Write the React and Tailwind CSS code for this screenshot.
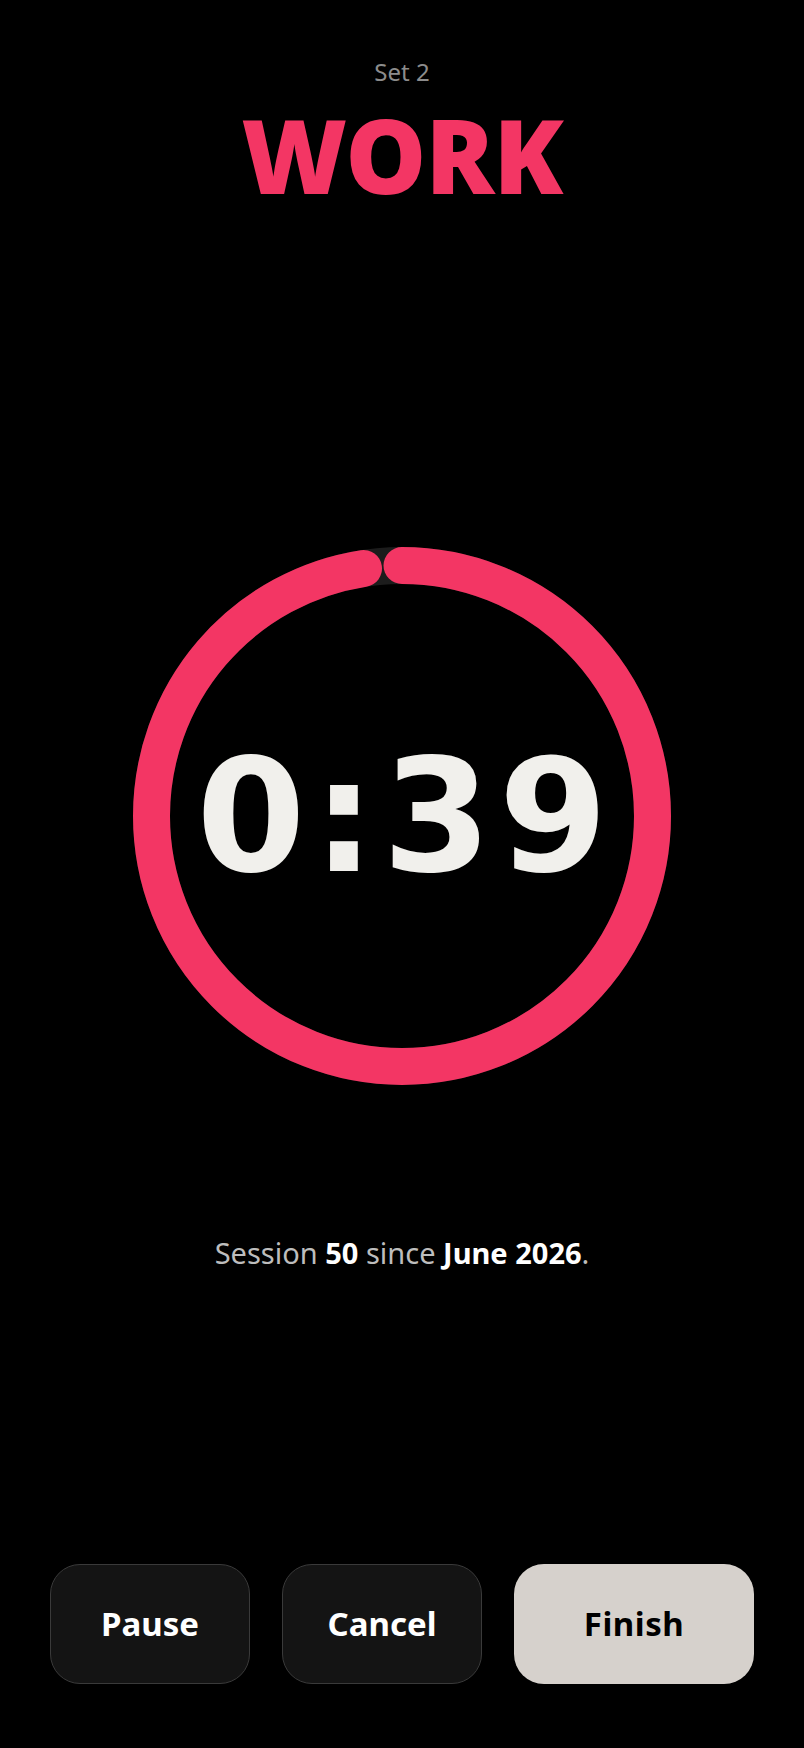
import React from "react";

const R = 250.5;
const C = 2 * Math.PI * R;
const progress = 39 / 40;

function Ring() {
  return (
    <svg width="538" height="538" viewBox="0 0 538 538" className="absolute inset-0">
      <circle cx="269" cy="269" r={R} fill="none" stroke="#1c1c1c" strokeWidth="37" />
      <circle
        cx="269"
        cy="269"
        r={R}
        fill="none"
        stroke="#f33664"
        strokeWidth="37"
        strokeLinecap="round"
        strokeDasharray={C}
        strokeDashoffset={C * (1 - progress)}
        transform="rotate(-90 269 269)"
      />
    </svg>
  );
}

export default function App() {
  return (
    <div className="min-h-screen bg-black flex flex-col items-center font-['Noto_Sans',sans-serif]">
      <div className="pt-[56px] text-[24px] leading-[32px] text-[#8c8c8c]">Set 2</div>
      <div className="mt-[17px] text-[102px] leading-[100px] font-black text-[#f33664] tracking-[-1px]">WORK</div>
      <div className="relative mt-[342px] w-[538px] h-[538px] flex items-center justify-center">
        <Ring />
        <div className="relative pl-[7px] font-['DejaVu_Sans',sans-serif] font-bold text-[157px] leading-none text-[#f1f0ec] tracking-[7px]">
          0:39
        </div>
      </div>
      <div className="mt-[150px] text-[29px] leading-[36px] text-[#bdbdbd]">
        Session <span className="font-bold text-white">50</span> since{" "}
        <span className="font-bold text-white">June 2026</span>.
      </div>
      <div className="flex-1" />
      <div className="w-full px-[50px] pb-[64px] grid grid-cols-[1fr_1fr_1.2fr] gap-[32px]">
        <button className="h-[120px] rounded-[30px] bg-[#141414] border border-[#3a3a3a] text-white text-[33px] font-bold">
          Pause
        </button>
        <button className="h-[120px] rounded-[30px] bg-[#141414] border border-[#3a3a3a] text-white text-[33px] font-bold">
          Cancel
        </button>
        <button className="h-[120px] rounded-[30px] bg-[#d6d1cc] text-black text-[33px] font-bold tracking-[0.5px]">
          Finish
        </button>
      </div>
    </div>
  );
}
